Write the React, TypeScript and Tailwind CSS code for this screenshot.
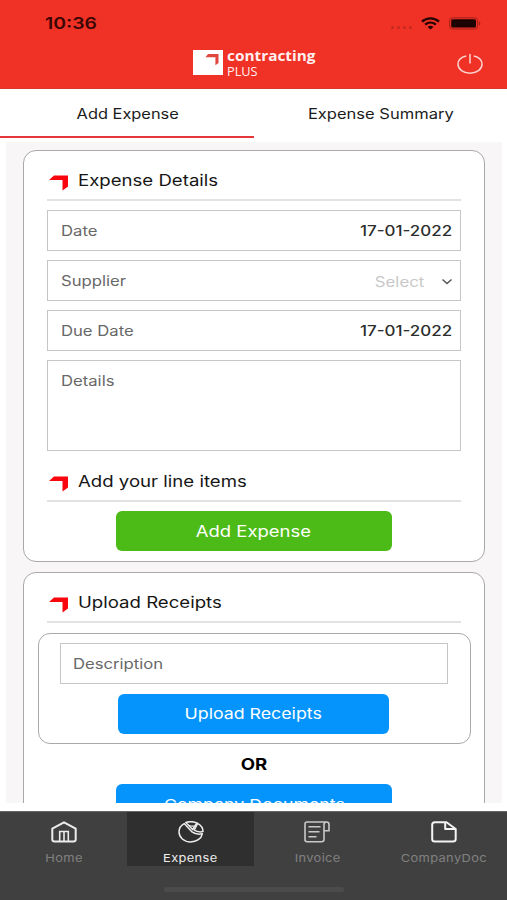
import type { ReactNode } from 'react';
import clsx from 'clsx';

type StretchProps = {
  children: ReactNode;
  className?: string;
};

/** Wide lettering used across the app */
const Stretch = ({ children, className }: StretchProps) => (
  <span
    className={clsx(
      'inline-block whitespace-nowrap',
      className ?? 'origin-left scale-x-[1.2]'
    )}
  >
    {children}
  </span>
);

const StatusBar = () => (
  <div className="flex h-[46px] items-center justify-between pl-[45px] pr-[26px]">
    <span className="origin-left scale-x-[1.21] text-[16px] leading-none font-semibold text-[#3a0604]">
      10:36
    </span>
    <div className="flex items-center">
      <div className="mt-[9px] mr-[9px] flex gap-[3px]">
        {[0, 1, 2, 3].map((dot) => (
          <span key={dot} className="h-[3px] w-[3px] rounded-full bg-[#c42a20]" />
        ))}
      </div>
      <svg width="19" height="13" viewBox="0 0 19 13" className="mr-[9px]">
        <g fill="none" stroke="#240302" strokeWidth="2.3">
          <path d="M1 4.6C5.8.2 13.2.2 18 4.6" />
          <path d="M4.2 7.7C7.3 5 11.7 5 14.8 7.7" />
        </g>
        <path d="M6.6 9.9c1.7-1.5 4.1-1.5 5.8 0L9.5 12.6z" fill="#240302" />
      </svg>
      <svg width="32" height="13" viewBox="0 0 32 13">
        <rect x=".6" y=".8" width="28" height="11.2" rx="3" fill="none" stroke="#a3221a" />
        <rect x="2.2" y="2.2" width="24.8" height="8.4" rx="1.5" fill="#1c0201" />
        <path d="M30 4.4c1.8.6 1.8 3.5 0 4.1z" fill="#a3221a" />
      </svg>
    </div>
  </div>
);

const Header = () => (
  <header className="h-[89px] border-b border-[#d9342a] bg-[#f03125]">
    <StatusBar />
    <div className="flex h-[42px] items-start justify-between pl-[192.5px] pr-[24px]">
      <div className="flex pt-[4px]">
        <svg width="30" height="25" viewBox="0 0 30 25">
          <rect width="30" height="25" fill="#fff" />
          <path d="M15 4H25.5V13L22.4 15.2V7.2H12.5z" fill="#e2473f" />
        </svg>
        <div className="ml-[4.5px] font-['Open_Sans','Noto_Sans',sans-serif] text-[#fff0ef]">
          <div className="h-[14px] origin-left scale-x-[1.06] text-[14.5px] leading-[12px] font-bold">
            contracting
          </div>
          <div className="origin-left scale-x-[0.98] text-[13px] leading-[14px] font-medium">
            PLUS
          </div>
        </div>
      </div>
      <svg width="26" height="22" viewBox="0 0 26 22" className="mt-[8px]">
        <path
          d="M9.2 2.1C4.4 3.2 1 6.2 1 10.3c0 5 5.3 9 12 9s12-4 12-9c0-4.1-3.4-7.1-8.2-8.2M13 0v9.5"
          fill="none"
          stroke="#fbd3d0"
          strokeWidth="1.5"
        />
      </svg>
    </div>
  </header>
);

const Tabs = () => (
  <div className="flex h-[53px] text-[14px] text-[#1c1c1c]">
    <div className="flex h-[49px] w-[254px] items-center justify-center border-b-2 border-[#e6363a] pt-px pl-[2px]">
      <Stretch className="scale-x-[1.17]">Add Expense</Stretch>
    </div>
    <div className="flex h-[49px] flex-1 items-center justify-center pb-[1px]">
      <Stretch className="scale-x-[1.18]">Expense Summary</Stretch>
    </div>
  </div>
);

const SectionTitle = ({ children }: { children: ReactNode }) => (
  <div className="flex h-[50px] items-center border-b-2 border-[#e2e2e2] pt-[11px] text-[15.5px] text-[#161616]">
    <svg width="20" height="16" viewBox="0 0 20 16" className="mt-[4px] ml-[2px] mr-[9px]">
      <path d="M5 .5H19V11.5L13.5 15.5V5H0z" fill="#f8050d" />
    </svg>
    <Stretch>{children}</Stretch>
  </div>
);

const Field = ({ label, children }: { label: string; children?: ReactNode }) => (
  <div className="flex h-[41px] items-center justify-between border border-[#c6c6c6] pr-[8px] pl-[12.5px] text-[14px] text-[#686868]">
    <Stretch className="origin-left scale-x-[1.19]">{label}</Stretch>
    {children}
  </div>
);

const DateValue = () => (
  <Stretch className="origin-right scale-x-[1.21] font-medium text-[#2c2c2c]">
    17-01-2022
  </Stretch>
);

const Button = ({ children, className }: { children: ReactNode; className: string }) => (
  <button
    className={clsx(
      'mx-auto flex h-[40px] items-center justify-center rounded-[6px] text-white',
      className
    )}
  >
    {children}
  </button>
);

const ExpenseDetails = () => (
  <section className="h-[412px] rounded-[13px] border border-[#a9a9a9] bg-white px-[23px]">
    <SectionTitle>Expense Details</SectionTitle>
    <div className="mt-[9px] flex flex-col gap-[9px]">
      <Field label="Date">
        <DateValue />
      </Field>
      <Field label="Supplier">
        <div className="flex items-center pt-[2px]">
          <Stretch className="origin-right scale-x-[1.2] text-[#c8c8c8]">Select</Stretch>
          <svg width="12" height="8" viewBox="0 0 12 8" className="mr-[-1px] ml-[17px]">
            <path d="M1.5 1.5L6 5.5L10.5 1.5" fill="none" stroke="#555" strokeWidth="1.5" />
          </svg>
        </div>
      </Field>
      <Field label="Due Date">
        <DateValue />
      </Field>
      <div className="h-[91px] border border-[#c6c6c6] pt-[9px] pl-[12.5px] text-[14px] text-[#686868]">
        <Stretch className="origin-left scale-x-[1.19]">Details</Stretch>
      </div>
    </div>
    <div className="pt-px">
      <SectionTitle>Add your line items</SectionTitle>
    </div>
    <Button className="mt-[9px] w-[276px] bg-[#4cbb17] pt-px pr-px text-[15.5px]">
      <Stretch className="scale-x-[1.19]">Add Expense</Stretch>
    </Button>
  </section>
);

const UploadReceipts = () => (
  <section className="mt-[10px] h-[260px] rounded-[13px] border border-[#a9a9a9] bg-white px-[23px]">
    <SectionTitle>Upload Receipts</SectionTitle>
    <div className="-mx-[9.5px] mt-[10px] h-[111px] rounded-[12px] border border-[#a9a9a9] pr-[22px] pl-[21px] pt-[9px]">
      <Field label="Description" />
      <Button className="mt-[10px] w-[271px] bg-[#0494fc] pt-px text-[14.8px]">
        <Stretch className="scale-x-[1.2]">Upload Receipts</Stretch>
      </Button>
    </div>
    <div className="flex h-[40px] items-center justify-center pt-px text-[15.5px] font-bold text-black">
      <Stretch className="scale-x-[1.2]">OR</Stretch>
    </div>
    <Button className="w-[276px] bg-[#0494fc] pt-[2px] text-[14.8px]">
      <Stretch className="scale-x-[1.2]">Company Documents</Stretch>
    </Button>
  </section>
);

const HomeIcon = () => (
  <svg width="26" height="22" viewBox="0 0 26 22" fill="none" stroke="#ececec" strokeWidth="2">
    <path
      d="M1.3 7.6L13 1.3L24.7 7.6V18.4Q24.7 20.4 22.4 20.4H3.6Q1.3 20.4 1.3 18.4Z"
      strokeLinejoin="round"
    />
    <path d="M8.7 20V10.5H17.3V20M13 11V20" strokeWidth="1.6" />
  </svg>
);

const ExpenseIcon = () => (
  <svg
    width="26"
    height="22"
    viewBox="0 0 26 22"
    fill="none"
    stroke="#ececec"
    strokeWidth="1.5"
    strokeLinejoin="round"
  >
    <path d="M6.2 2.6C3 4.3 1 7.3 1 10.8C1 16.5 6 20.9 12.5 20.9C18.6 20.9 23.4 17.6 24.3 12.8C20.5 13.6 16.5 12.8 13.6 10.6Z" />
    <path d="M7.8 1.5C11.5.3 15.5.5 18.8 1.9L14.6 8.6Z" />
    <path d="M19.6 2.4C23 4.2 25 7 25 10.6C22 11.2 18.8 10.8 16.2 9.2Z" />
    <path d="M10.6 4.2C12.6 5.2 14.8 5.4 16.8 5" strokeWidth="1.2" />
  </svg>
);

const InvoiceIcon = () => (
  <svg width="26" height="22" viewBox="0 0 26 22" fill="none" stroke="#c9c9c9" strokeWidth="1.6">
    <path d="M20 9.8V18.5Q20 20.7 17.6 20.7H3Q1 20.7 1 18.8V3Q1 1 3 1H22.6Q25 1 25 3.4V9.8H20V3.4Q20 1 22.4 1" />
    <path d="M4.5 5.8H16.5M4.5 10.8H15.5M4.5 15.8H12.5" />
  </svg>
);

const DocIcon = () => (
  <svg
    width="26"
    height="22"
    viewBox="0 0 26 22"
    fill="none"
    stroke="#f4f4f4"
    strokeWidth="2"
    strokeLinejoin="round"
  >
    <path d="M3.8 1.2H15.5L24.7 8V18Q24.7 20.6 21.8 20.6H3.8Q1.2 20.6 1.2 18V3.8Q1.2 1.2 3.8 1.2Z" />
    <path d="M14.2 1.5V8H24.3" />
  </svg>
);

const navItems = [
  { label: 'Home', icon: <HomeIcon />, active: false },
  { label: 'Expense', icon: <ExpenseIcon />, active: true },
  { label: 'Invoice', icon: <InvoiceIcon />, active: false },
  { label: 'CompanyDoc', icon: <DocIcon />, active: false },
];

const BottomNav = () => (
  <nav className="h-[89px] border-t border-[#666] bg-[#404040]">
    <div className="grid h-[54px] grid-cols-4">
      {navItems.map((item) => (
        <div
          key={item.label}
          className={clsx(
            'flex flex-col items-center pt-[9px] pl-[1px] text-[11px]',
            item.active ? 'bg-[#2f2f2f] text-[#ededed]' : 'text-[#808080]'
          )}
        >
          {item.icon}
          <div className="mt-[7px] leading-[16px]">
            <Stretch className="scale-x-[1.17] tracking-[0.3px]">{item.label}</Stretch>
          </div>
        </div>
      ))}
    </div>
    <div className="mx-auto mt-[21px] h-[5px] w-[180px] rounded-full bg-[#4b4b4b]" />
  </nav>
);

export default function App() {
  return (
    <div className="flex h-[900px] w-[507px] flex-col overflow-hidden bg-white font-['Inter','Liberation_Sans',sans-serif]">
      <Header />
      <Tabs />
      <main className="mr-[5px] ml-[6px] h-[661px] overflow-hidden bg-[#f8f6f7] px-[17px] pt-[8px]">
        <ExpenseDetails />
        <UploadReceipts />
      </main>
      <div className="h-[8px]" />
      <BottomNav />
    </div>
  );
}
